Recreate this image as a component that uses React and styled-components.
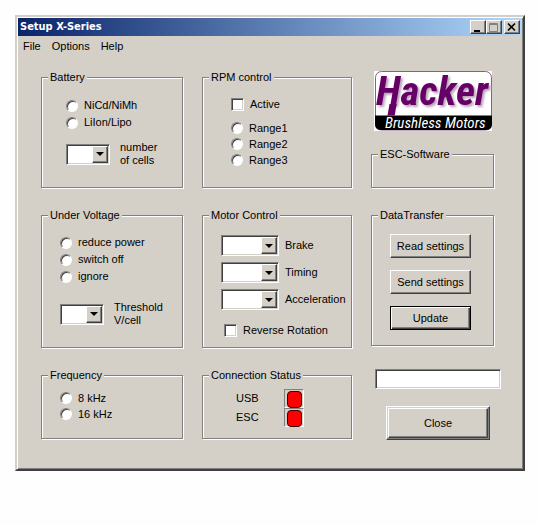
import React from 'react';
import styled, { createGlobalStyle } from 'styled-components';

const GlobalStyle = createGlobalStyle`
  * {
    box-sizing: border-box;
  }

  body {
    margin: 0;
    background: #fefefe;
    color: #000;
    font: 11px/13px 'Liberation Sans', Arial, sans-serif;
  }

  button,
  input,
  select {
    margin: 0;
    color: inherit;
    font: inherit;
  }
`;

const Desktop = styled.div`
  padding: 15px;
`;

const Window = styled.div`
  padding: 1px;
  background: #d4d0c8;
  border: 2px solid;
  border-color: #d4d0c8 #404040 #404040 #d4d0c8;
  box-shadow: inset 1px 1px #fff, inset -1px -1px #808080;
`;

const TitleBar = styled.header`
  display: flex;
  align-items: center;
  height: 18px;
  padding: 0 2px;
  background: linear-gradient(90deg, #0a246a, #b0d8fc);
  color: #fff;
`;

const Title = styled.h1`
  flex: 1;
  margin: 0;
  font: bold 11px/18px 'DejaVu Sans Condensed', 'DejaVu Sans', sans-serif;
`;

const TitleButton = styled.button`
  display: grid;
  place-items: center;
  width: 16px;
  height: 14px;
  margin-left: ${({ $spaced }) => ($spaced ? '2px' : '0')};
  padding: 0;
  background: #d4d0c8;
  border: 1px solid;
  border-color: #fff #404040 #404040 #fff;
  box-shadow: inset -1px -1px #808080;
`;

const MenuBar = styled.nav`
  display: flex;
  gap: 11px;
  height: 20px;
  padding: 0 5px;
`;

const MenuItem = styled.button`
  padding: 0;
  background: none;
  border: 0;
`;

const Content = styled.main`
  display: grid;
  grid-template-columns: 143fr 151fr 130fr;
  gap: 20px 18px;
  padding: 15px 21px 28px 23px;
`;

const SideColumn = styled.div`
  display: flex;
  flex-direction: column;
  justify-content: space-between;
  padding: ${({ $wide }) => ($wide ? '0 0 0 4px' : '0 6px 0 0')};
`;

const Group = styled.fieldset`
  min-width: 0;
  margin: 0 1px 1px 0;
  padding: 0;
  border: 1px solid #808080;
  box-shadow: 1px 1px #fff, inset 1px 1px #fff;
`;

const GroupBody = styled.div`
  display: flex;
  flex-direction: column;
  gap: ${({ $gap }) => $gap || '0'};
  padding: ${({ $pad }) => $pad};
`;

const Legend = styled.legend`
  margin-left: 6px;
  padding: 0 2px;
  background: #d4d0c8;
`;

const OptionLabel = styled.label`
  display: flex;
  align-items: center;
  gap: 6px;
  height: ${({ $tall }) => ($tall ? '17px' : '16px')};
`;

const Radio = styled.input.attrs({ type: 'radio' })`
  appearance: none;
  width: 12px;
  height: 12px;
  background: #fff;
  border: 1px solid;
  border-color: #808080 #fff #fff #808080;
  border-radius: 50%;
  box-shadow: inset 1px 1px #404040;

  &:checked {
    background: radial-gradient(circle, #000 2px, #fff 3px);
  }
`;

const Checkbox = styled.input.attrs({ type: 'checkbox' })`
  appearance: none;
  width: 13px;
  height: 13px;
  background: #fff;
  border: 1px solid;
  border-color: #808080 #fff #fff #808080;
  box-shadow: inset 1px 1px #404040, inset -1px -1px #d4d0c8;

  &:checked {
    background: radial-gradient(circle, #000 3px, #fff 4px);
  }
`;

const Field = styled.label`
  display: flex;
  align-items: center;
  gap: ${({ $gap }) => $gap || '6px'};
`;

const FieldText = styled.span`
  white-space: pre-line;
`;

const ComboBox = styled.span`
  display: grid;
  grid-template-columns: 1fr 16px;
  flex: none;
  width: ${({ $wide }) => ($wide ? '58px' : '44px')};
  height: 21px;
  padding: 1px;
  background: #fff;
  border: 1px solid;
  border-color: #808080 #fff #fff #808080;
  box-shadow: inset 1px 1px #404040, inset -1px -1px #d4d0c8;
`;

const Select = styled.select`
  grid-area: 1 / 1 / 2 / 3;
  appearance: none;
  min-width: 0;
  padding: 0 18px 0 2px;
  background: none;
  border: 0;
`;

const DropArrow = styled.span`
  display: grid;
  grid-area: 1 / 2;
  place-items: center;
  background: #d4d0c8;
  border: 1px solid;
  border-color: #fff #404040 #404040 #fff;
  box-shadow: inset -1px -1px #808080;
  pointer-events: none;

  &::after {
    content: '';
    border: 4px solid transparent;
    border-top-color: #000;
    border-bottom: 0;
  }
`;

const PushButton = styled.button`
  width: 81px;
  height: 24px;
  padding: 0;
  background: #d4d0c8;
  border: 1px solid;
  border-color: ${({ $primary }) => ($primary ? '#000' : '#fff #404040 #404040 #fff')};
  box-shadow: ${({ $primary }) =>
    $primary ? 'inset 1px 1px #fff, inset -1px -1px #404040, inset -2px -2px #808080' : 'inset -1px -1px #808080'};
`;

const CloseFrame = styled.div`
  align-self: center;
  width: 104px;
  padding: 1px;
  border: 1px solid;
  border-color: #fff #404040 #404040 #fff;
  box-shadow: inset -1px -1px #808080;
`;

const CloseButton = styled.button`
  width: 100%;
  height: 30px;
  padding: 0;
  background: #d4d0c8;
  border: 1px solid;
  border-color: #fff #404040 #404040 #fff;
  box-shadow: inset -1px -1px #808080;
`;

const StatusField = styled.input`
  width: 100%;
  height: 20px;
  padding: 0 3px;
  background: #fff;
  border: 1px solid;
  border-color: #808080 #fff #fff #808080;
  box-shadow: inset 1px 1px #404040, inset -1px -1px #d4d0c8;
`;

const StatusRow = styled.div`
  display: grid;
  grid-template-columns: 48px 20px;
  align-items: center;
`;

const Led = styled.span`
  height: 19px;
  padding: 1px 1px 1px 2px;
  border: 1px solid;
  border-color: #808080 #fff #fff #808080;

  &::after {
    content: '';
    display: block;
    height: 15px;
    background: #f00;
    border: 1px solid #400000;
    border-radius: 4px;
  }
`;

const LogoArt = styled.svg`
  display: block;
  width: 118px;
  height: 60px;
  margin-left: 3px;
`;

// the wordmark casts its own soft shadow
const Wordmark = styled.text`
  font: italic bold 41px 'Roboto Condensed', Roboto, sans-serif;
  fill: #660066;
  filter: drop-shadow(2px 2px 1px #b9a3b9);
`;

const Tagline = styled.text`
  font: italic 15px 'Roboto Condensed', Roboto, sans-serif;
  fill: #fff;
`;

const Combo = ({ label, options, wide, gap }) => (
  <Field $gap={gap}>
    <ComboBox $wide={wide}>
      <Select defaultValue="">
        <option value="" />
        {options.map((option) => (
          <option key={option}>{option}</option>
        ))}
      </Select>
      <DropArrow />
    </ComboBox>
    <FieldText>{label}</FieldText>
  </Field>
);

const RadioList = ({ name, items, tall }) => (
  <div>
    {items.map((item) => (
      <OptionLabel key={item} $tall={tall}>
        <Radio name={name} value={item} />
        {item}
      </OptionLabel>
    ))}
  </div>
);

const Logo = () => (
  <LogoArt viewBox="0 0 118 60" role="img" aria-label="Hacker Brushless Motors">
    <rect width="118" height="60" fill="#fff" />
    <rect x="1.5" y="0.5" width="116" height="58.5" rx="6" fill="#fff" stroke="#8d5a8d" />
    <path d="M1 44.5H118V53q0 6-6 6H7q-6 0-6-6z" fill="#000" />
    <Wordmark x="2" y="34">Hacker</Wordmark>
    <path d="M15.5 33H22.7L20.7 44.5H13.5z" fill="#660066" />
    <Tagline x="11" y="57">Brushless Motors</Tagline>
  </LogoArt>
);

const App = () => {
  return (
    <Desktop>
      <GlobalStyle />
      <Window>
        <TitleBar>
          <Title>Setup X-Series</Title>
          <TitleButton aria-label="Minimize">
            <svg width="12" height="10">
              <path d="M2 8h6v2H2z" />
            </svg>
          </TitleButton>
          <TitleButton aria-label="Maximize" disabled>
            <svg width="12" height="10" fill="none" stroke="#808080">
              <path d="M1.5 1.5h8v8h-8zM1 2.5h9" />
            </svg>
          </TitleButton>
          <TitleButton aria-label="Close window" $spaced>
            <svg width="12" height="10" stroke="#000" strokeWidth="1.6">
              <path d="M2 1.5l7 7M9 1.5l-7 7" />
            </svg>
          </TitleButton>
        </TitleBar>
        <MenuBar>
          <MenuItem>File</MenuItem>
          <MenuItem>Options</MenuItem>
          <MenuItem>Help</MenuItem>
        </MenuBar>
        <Content>
          <Group>
            <Legend>Battery</Legend>
            <GroupBody $gap="10px" $pad="13px 0 20px 24px">
              <RadioList name="battery" items={['NiCd/NiMh', 'LiIon/Lipo']} tall />
              <Combo label={'number\nof cells'} options={[2, 3, 4, 5, 6]} gap="10px" />
            </GroupBody>
          </Group>
          <Group>
            <Legend>RPM control</Legend>
            <GroupBody $gap="7px" $pad="12px 0 0 28px">
              <OptionLabel $tall>
                <Checkbox />
                Active
              </OptionLabel>
              <RadioList name="range" items={['Range1', 'Range2', 'Range3']} />
            </GroupBody>
          </Group>
          <SideColumn>
            <Logo />
            <Group>
              <Legend>ESC-Software</Legend>
              <GroupBody $pad="13px 0" />
            </Group>
          </SideColumn>

          <Group>
            <Legend>Under Voltage</Legend>
            <GroupBody $gap="16px" $pad="12px 0 0 18px">
              <RadioList name="voltage" items={['reduce power', 'switch off', 'ignore']} tall />
              <Combo label={'Threshold\nV/cell'} options={['2.8', '3.0', '3.2']} gap="10px" />
            </GroupBody>
          </Group>
          <Group>
            <Legend>Motor Control</Legend>
            <GroupBody $gap="12px" $pad="13px 0 8px 18px">
              <GroupBody $gap="6px" $pad="0">
                <Combo label="Brake" options={['Off', 'On']} wide />
                <Combo label="Timing" options={['Low', 'High']} wide />
                <Combo label="Acceleration" options={['Slow', 'Fast']} wide />
              </GroupBody>
              <GroupBody $pad="0 0 0 3px">
                <OptionLabel $tall>
                  <Checkbox />
                  Reverse Rotation
                </OptionLabel>
              </GroupBody>
            </GroupBody>
          </Group>
          <SideColumn>
            <Group>
              <Legend>DataTransfer</Legend>
              <GroupBody $gap="12px" $pad="12px 0 15px 18px">
                <PushButton>Read settings</PushButton>
                <PushButton>Send settings</PushButton>
                <PushButton $primary>Update</PushButton>
              </GroupBody>
            </Group>
          </SideColumn>

          <Group>
            <Legend>Frequency</Legend>
            <GroupBody $pad="8px 0 0 18px">
              <RadioList name="frequency" items={['8 kHz', '16 kHz']} />
            </GroupBody>
          </Group>
          <Group>
            <Legend>Connection Status</Legend>
            <GroupBody $pad="7px 0 11px 33px">
              {['USB', 'ESC'].map((port) => (
                <StatusRow key={port}>
                  {port}
                  <Led />
                </StatusRow>
              ))}
            </GroupBody>
          </Group>
          <SideColumn $wide>
            <StatusField aria-label="Status message" readOnly />
            <CloseFrame>
              <CloseButton>Close</CloseButton>
            </CloseFrame>
          </SideColumn>
        </Content>
      </Window>
    </Desktop>
  );
};

export default App;
